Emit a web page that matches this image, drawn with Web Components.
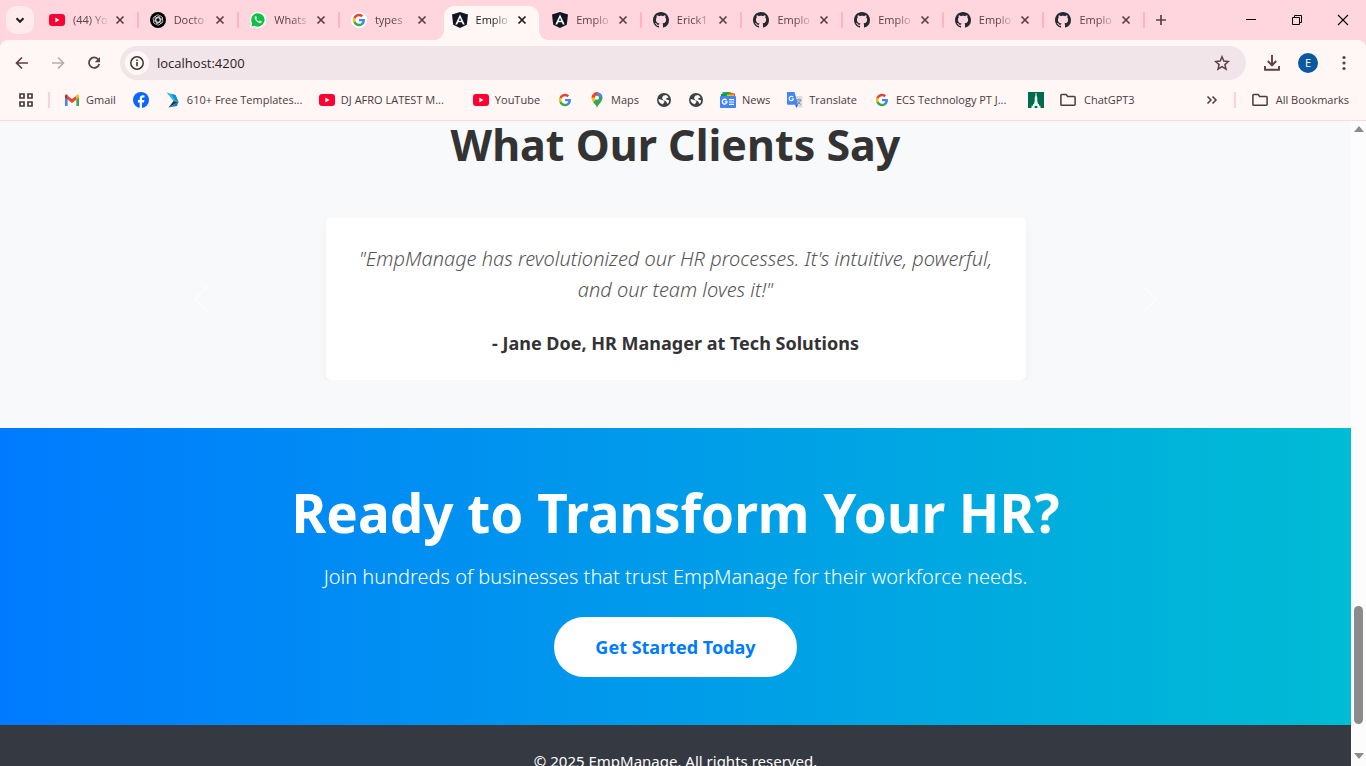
<!DOCTYPE html>
<html lang="en">
<head>
<meta charset="utf-8">
<title>EmpManage</title>
<style>
  html, body { margin: 0; height: 100%; }
  body { font-family: "Noto Sans", "Open Sans", sans-serif; overflow: hidden; }
</style>
</head>
<body>
<browser-window></browser-window>
<script>
const GOOGLE = `
  <path fill="#4285f4" d="M45.1 24.5c0-1.6-.1-3.1-.4-4.5H24v8.5h11.8c-.5 2.8-2 5.100-4.400 6.700v5.500h7.100c4.200-3.800 6.600-9.500 6.600-16.200z"/>
  <path fill="#34a853" d="M24 46c5.900 0 10.900-2 14.500-5.300l-7.100-5.500c-2 1.300-4.500 2.100-7.400 2.100-5.700 0-10.600-3.900-12.300-9.100H4.300v5.700C8 41.100 15.400 46 24 46z"/>
  <path fill="#fbbc05" d="M11.700 28.200c-.4-1.300-.7-2.700-.7-4.200s.3-2.900.7-4.200v-5.700H4.300C2.800 17.100 2 20.400 2 24s.8 6.900 2.300 9.900z"/>
  <path fill="#ea4335" d="M24 10.800c3.200 0 6.100 1.100 8.400 3.300l6.300-6.300C34.900 4.200 29.900 2 24 2 15.400 2 8 6.900 4.300 14.100l7.400 5.700c1.700-5.200 6.600-9 12.300-9z"/>`;
const stroke = (body, w = 2) => `<g fill="none" stroke="currentColor" stroke-width="${w}">${body}</g>`;

const ICONS = {
  youtube: ['0 0 16 16', `<rect y="2" width="16" height="12" rx="3" fill="#ff0033"/><path d="M6.300 5.500v5l4.200-2.500z" fill="#fff"/>`],
  openai: ['0 0 16 16', `<circle cx="8" cy="8" r="8" fill="#000"/><g fill="none" stroke="#ddd" stroke-width=".8">
    ${[0, 60, 120, 180, 240, 300].map(a => `<path transform="rotate(${a} 8 8)" d="M5.200 8.800V5.400a2.500 2.500 0 0 1 4.600-1.300M8 5.500l2.200 1.300v2.400"/>`).join('')}</g>`],
  whatsapp: ['0 0 16 16', `<path d="M8 0a8 8 0 0 0-7 11.800L0 16l4.300-1A8 8 0 1 0 8 0z" fill="#fff"/>
    <path d="M8 1.200a6.700 6.700 0 0 0-5.800 10.200l-.8 3.200 3.300-.8A6.700 6.700 0 1 0 8 1.200z" fill="#0cc143"/>
    <path d="M5.500 4.300c-.9.400-1.200 1.500-.6 2.800a8 8 0 0 0 4 3.900c1.500.6 2.500.2 2.800-.9l.1-.6-1.900-.9-.9 1c-1.300-.5-2.200-1.400-2.800-2.600l.7-.9-.7-1.800z" fill="#fff"/>`],
  googleTab: ['0 0 16 16', `<circle cx="8" cy="8" r="8" fill="#fff"/><g transform="translate(1.300 1.300) scale(.28)">${GOOGLE}</g>`],
  google: ['0 0 16 16', `<circle cx="8" cy="8" r="8" fill="#fff"/><g transform="translate(1.300 1.300) scale(.28)">${GOOGLE}</g>`],
  angular: ['0 0 16 16', `<path d="M8 0l8 2.500-1.200 10.200L8 16l-6.800-3.300L0 2.500z" fill="#101722"/>
    <path fill="#fff" d="M8 2.500L3.300 12.500H5.200L6.200 10.200H9.800L10.800 12.500H12.700zM8 5.700L9.200 8.700H6.800z"/>`],
  github: ['0 0 16 16', `<path fill="#24292f" d="M8 0C3.580 0 0 3.580 0 8c0 3.540 2.290 6.530 5.470 7.590.4.070.55-.17.55-.38 0-.19-.01-.82-.01-1.490-2.010.37-2.530-.49-2.690-.94-.09-.23-.48-.94-.82-1.130-.28-.15-.68-.52-.01-.53.63-.01 1.080.58 1.230.82.72 1.210 1.870.87 2.330.66.07-.52.28-.87.51-1.070-1.780-.2-3.640-.89-3.640-3.950 0-.87.31-1.590.82-2.150-.08-.2-.36-1.020.08-2.120 0 0 .67-.21 2.200.82.64-.18 1.320-.27 2-.27s1.360.09 2 .27c1.530-1.040 2.200-.82 2.200-.82.44 1.100.16 1.920.08 2.120.51.56.82 1.270.82 2.150 0 3.070-1.870 3.750-3.650 3.950.29.25.54.73.54 1.480 0 1.070-.01 1.930-.01 2.200 0 .21.15.46.55.38A8 8 0 0 0 16 8c0-4.420-3.580-8-8-8z"/>`],
  close: ['0 0 16 16', stroke('<path d="M4.500 4.500l7 7m0-7l-7 7"/>', 1.7)],
  plus: ['0 0 16 16', stroke('<path d="M8 3v10M3 8h10"/>', 1.7)],
  chevronDown: ['0 0 16 16', stroke('<path d="M4.500 6.300L8 9.800l3.500-3.500"/>', 2)],
  minimize: ['0 0 16 16', stroke('<path d="M3 7.500h10"/>', 1)],
  restore: ['0 0 16 16', stroke('<path d="M3.500 5.500h7v7h-7zM5.500 5.500v-2h7v7h-2"/>', 1)],
  closeWindow: ['0 0 16 16', stroke('<path d="M3 3l10 10M13 3L3 13"/>', 1.100)],
  back: ['0 0 16 16', stroke('<path d="M14 8H3M8 2.500L2.500 8 8 13.500"/>', 1.700)],
  forward: ['0 0 16 16', stroke('<path d="M2 8h11M8 2.500L13.500 8 8 13.500"/>', 1.700)],
  reload: ['0 0 16 16', stroke('<path d="M12.300 4.500A5.200 5.200 0 1 0 13.200 9"/>', 1.800) + '<path d="M14 2v5.300H8.700z" fill="currentColor"/>'],
  info: ['0 0 16 16', stroke('<circle cx="8" cy="8" r="6.200"/>', 1.500) + '<path d="M7.200 7h1.600v4.300H7.200zM7.200 4.500h1.600v1.600H7.200z" fill="currentColor"/>'],
  star: ['0 0 16 16', stroke('<path d="M8 1.800l1.800 4.300 4.600.4-3.500 3.100 1.100 4.600L8 11.700l-4 2.500 1.100-4.600-3.500-3.100 4.600-.4z"/>', 1.500)],
  download: ['0 0 16 16', stroke('<path d="M8 0v10M3.800 6L8 10.300 12.200 6M1 11v3.700h14V11"/>', 1.900)],
  dots: ['0 0 16 16', '<g fill="currentColor"><circle cx="8" cy="2.500" r="1.600"/><circle cx="8" cy="8" r="1.600"/><circle cx="8" cy="13.500" r="1.600"/></g>'],
  apps: ['0 0 16 16', stroke('<path d="M2 2h4v4H2zM10 2h4v4h-4zM2 10h4v4H2zM10 10h4v4h-4z"/>', 1.700)],
  gmail: ['0 0 16 16', `<path d="M1 14h2.600V6L1 4z" fill="#4285f4"/><path d="M12.400 14H15V4l-2.600 2z" fill="#34a853"/>
    <path d="M3.600 3.700L8 7l4.400-3.300v3.900L8 10.900 3.600 7.600z" fill="#ea4335"/>
    <path d="M1 4.200C1 2.500 2.600 2.100 3.600 3v4.600L1 5.600z" fill="#c5221f"/><path d="M15 4.200C15 2.500 13.400 2.100 12.400 3v4.600L15 5.600z" fill="#fbbc04"/>`],
  facebook: ['0 0 16 16', `<circle cx="8" cy="8" r="8" fill="#0866ff"/><path d="M6.700 16V10.600H4.900V8h1.800V6.700c0-2.400 1.200-3.500 3.300-3.500l1.500.2v2.200h-1C9.400 5.600 9 6 9 6.900V8h2.400L11 10.600H9V16z" fill="#fff"/>`],
  templates: ['0 0 16 16', `<path d="M1.500 .500L10.500 3 13.500 10 8.500 9z" fill="#35b8e6"/><path d="M6 1.700L10.500 3 13.500 10 10 8.500z" fill="#1593d0"/><path d="M3.500 15.500L8.500 9 13.500 10z" fill="#123e5c"/><path d="M3.500 15.500L13.500 10 12 14z" fill="#1c7cae"/>`],
  maps: ['0 0 16 16', `<path d="M8 16c.5-3.500 5.500-5.700 5.500-10.300A5.500 5.500 0 0 0 12.300 2.300L4 10c1.500 2 3.600 3.500 4 6z" fill="#34a853"/>
    <path d="M2.500 5.500c0 1.900.6 3.200 1.500 4.500l6-7-3.300-2.700z" fill="#fbbc04"/><path d="M3.800 2.100A5.500 5.500 0 0 0 2.500 5.700L6 5.300 6.500 4z" fill="#ea4335"/><path d="M3.800 2.100L6.500 4.300 10 .400A5.500 5.500 0 0 0 3.800 2.100z" fill="#ea4335"/>
    <path d="M10 .400L6.200 4.700l3.500 2.800 3.500-4A5.500 5.500 0 0 0 10 .4z" fill="#4285f4"/><circle cx="8" cy="5.700" r="2" fill="#fff"/>`],
  globe: ['0 0 16 16', `<circle cx="8" cy="8" r="7" fill="#3c4043"/><path d="M2.500 7.500c1-.5 2.500-.2 3.500.5s2.200.3 2.400 1.500-1.300 1.200-1.200 2.800c-2-.3-4.600-1.800-4.700-4.800zM7 3.800l3-.9 1.800 1.300.7 1.600-1.900.3-.4 1.300 2.900.8c.2 1.600-.6 3-1.700 3.700L10 9.300 7.200 8 6 6.300z" fill="#fff7f5"/>`],
  news: ['0 0 16 16', `<path d="M2.500 0h8v5h-8z" fill="#34a853"/><path d="M10 .5l5 1.300V5h-5z" fill="#ea4335"/><path d="M1 2l8-1v4H1z" fill="#0f9d58"/><path d="M7 2.500h7V5H7z" fill="#fbbc04"/><rect y="4" width="16" height="12" rx="1" fill="#4285f4"/>
    <g fill="none" stroke="#fff" stroke-width="1.300"><path d="M6.600 8.300A2.400 2.400 0 1 0 7 10H4.900"/><path d="M9 7.700h5M9 10h5M9 12.300h5" stroke-width="1.200"/></g>`],
  translate: ['0 0 16 16', `<path d="M6 4h9.300v11.500H9z" fill="#dadce0"/><path d="M8 12.500h3L9.500 16z" fill="#3b57c4"/><path d="M0 0h7.500L11 12.800H1a1 1 0 0 1-1-1z" fill="#4285f4"/>
    <g fill="none"><path d="M6.200 5.300A2.200 2.200 0 1 0 6.500 7H4.500" stroke="#fff" stroke-width="1.100"/><path d="M9.500 8h5M12 6.800V8M13.500 8c-.5 2-1.500 3.500-3 4.500M10.500 9c.8 1.600 2 2.800 3.300 3.500" stroke="#7a8a90"/></g>`],
  tower: ['0 0 16 16', `<path d="M0 0h16v16H0z" fill="#006b4d"/><path d="M7.500 1h1v2l.8 3v3l.9 3H11v1.500l1.500.5v2h-9v-2l1.500-.5V12h.8l.9-3V6l.8-3z" fill="#e6f2ea"/><path d="M6.700 14h2.600v2H6.700z" fill="#006b4d"/>`],
  folder: ['0 0 16 16', stroke('<path d="M.9 3.400a.8.800 0 0 1 .8-.8H6l1.700 1.900h6.600a.8.800 0 0 1 .8.800v7.200a.8.800 0 0 1-.8.800H1.700a.8.800 0 0 1-.8-.8z"/>', 1.500)],
  more: ['0 0 16 16', stroke('<path d="M3.500 4.500L7 8l-3.500 3.500M8.500 4.500L12 8l-3.500 3.500"/>', 1.500)],
  previous: ['0 0 16 16', '<path fill="#fff" d="M11.400 1.600a.5.500 0 0 1 0 .8L5.700 8l5.700 5.600a.5.500 0 0 1-.8.800l-6-6a.5.500 0 0 1 0-.8l6-6a.5.500 0 0 1 .8 0z"/>'],
  next: ['0 0 16 16', '<path fill="#fff" d="M4.600 1.600a.5.500 0 0 1 .8 0l6 6a.5.500 0 0 1 0 .8l-6 6a.5.500 0 0 1-.8-.8L10.300 8 4.600 2.400a.5.500 0 0 1 0-.8z"/>'],
};

const BASE = `*, *::before, *::after { box-sizing: border-box; }
  button { font: inherit; color: inherit; background: none; border: 0; padding: 0; margin: 0; }
  a { color: inherit; text-decoration: none; }`;

function define(name, render) {
  customElements.define(name, class extends HTMLElement {
    connectedCallback() {
      if (this.shadowRoot) return;
      const template = document.createElement('template');
      template.innerHTML = render(this);
      this.attachShadow({ mode: 'open' }).append(template.content.cloneNode(true));
    }
  });
}

define('ui-icon', el => {
  const [box, body] = ICONS[el.getAttribute('name')];
  return `<style>:host { display: block; flex: none; width: 16px; height: 16px; } svg { display: block; width: 100%; height: 100%; }</style>
    <svg viewBox="${box}" aria-hidden="true">${body}</svg>`;
});

define('browser-tab', el => `
  <style>${BASE}
    :host { display: flex; align-items: center; flex: 1 1 0; min-width: 0; height: 40px; padding-left: 11px; position: relative; color: #5b4046; }
    .tab { display: flex; align-items: center; gap: 8px; flex: 1; min-width: 0; height: 34px; z-index: 1; }
    .title { flex: 1; min-width: 0; overflow: hidden; white-space: nowrap; text-align: left; line-height: 16px;
      -webkit-mask-image: linear-gradient(90deg, #000 45%, transparent 95%); mask-image: linear-gradient(90deg, #000 45%, transparent 95%); }
    .close { width: 16px; height: 16px; margin-right: 9px; z-index: 1; }
    .line { width: 2px; height: 16px; border-radius: 1px; background: #ffb3c0; }
    :host([quiet]) .line { visibility: hidden; }
    :host([active]) { color: #1f1a1b; }
    :host([active])::before { content: ""; position: absolute; inset: 6px 2px 0 3px; border-radius: 10px 10px 0 0; background: #fff7f5; }
    :host([active])::after { content: ""; position: absolute; left: -7px; right: -8px; bottom: 0; height: 10px;
      background: radial-gradient(circle at 0 0, transparent 10px, #fff7f5 10px) left / 10px 10px no-repeat,
                  radial-gradient(circle at 100% 0, transparent 10px, #fff7f5 10px) right / 10px 10px no-repeat; }
  </style>
  <button class="tab"><ui-icon name="${el.getAttribute('icon')}"></ui-icon><span class="title"><slot></slot></span></button>
  <button class="close" aria-label="Close tab"><ui-icon name="close"></ui-icon></button>
  <span class="line"></span>`);

define('tab-strip', () => `
  <style>${BASE}
    :host { display: flex; align-items: center; height: 40px; background: #ffd6de; color: #5b4046; }
    .search { display: grid; place-items: center; flex: none; width: 28px; height: 28px; margin: 0 4px 0 6px; border-radius: 10px; background: #ffebee; color: #1f1a1b; }
    .tabs { display: flex; flex: 1; min-width: 0; }
    .add { display: grid; place-items: center; flex: none; width: 32px; height: 28px; margin-right: 51px; }
    .window { display: flex; flex: none; color: #000; }
    .window button { display: grid; place-items: center; width: 46px; height: 40px; }
  </style>
  <button class="search" aria-label="Search tabs"><ui-icon name="chevronDown"></ui-icon></button>
  <div class="tabs">
    <browser-tab icon="youtube">(44) Yo</browser-tab>
    <browser-tab icon="openai">Docto</browser-tab>
    <browser-tab icon="whatsapp">Whats</browser-tab>
    <browser-tab icon="googleTab" quiet>types</browser-tab>
    <browser-tab icon="angular" active quiet>Emplo</browser-tab>
    <browser-tab icon="angular">Emplo</browser-tab>
    <browser-tab icon="github">Erick1</browser-tab>
    <browser-tab icon="github">Emplo</browser-tab>
    <browser-tab icon="github">Emplo</browser-tab>
    <browser-tab icon="github">Emplo</browser-tab>
    <browser-tab icon="github">Emplo</browser-tab>
  </div>
  <button class="add" aria-label="New tab"><ui-icon name="plus"></ui-icon></button>
  <div class="window">
    <button aria-label="Minimize"><ui-icon name="minimize"></ui-icon></button>
    <button aria-label="Restore"><ui-icon name="restore"></ui-icon></button>
    <button aria-label="Close"><ui-icon name="closeWindow"></ui-icon></button>
  </div>`);

define('address-bar', () => `
  <style>${BASE}
    :host { display: block; background: #ffd6de; color: #5b4046; }
    .bar { display: flex; align-items: center; gap: 8px; padding: 6px 8px 0; background: #fff7f5; border-radius: 8px 8px 0 0; }
    .tool { display: grid; place-items: center; flex: none; width: 28px; height: 28px; }
    .off { color: #b9adae; }
    .field { display: flex; align-items: center; gap: 8px; flex: 1; height: 34px; margin: 0 4px; padding: 0 10px 0 5px; border-radius: 17px; background: #f1e5e9; }
    .info { display: grid; place-items: center; flex: none; width: 24px; height: 24px; border-radius: 12px; background: #fff7f5; color: #3c3335; }
    input { flex: 1; min-width: 0; border: 0; outline: 0; padding: 0; background: none; color: #2a2224; font: inherit; font-size: 13px; line-height: 20px; }
    .avatar { width: 20px; height: 20px; border-radius: 10px; background: #0b57a0; color: #fff; font-size: 11px; line-height: 20px; text-align: center; }
  </style>
  <div class="bar">
    <button class="tool" aria-label="Back"><ui-icon name="back"></ui-icon></button>
    <button class="tool off" aria-label="Forward"><ui-icon name="forward"></ui-icon></button>
    <button class="tool" aria-label="Reload"><ui-icon name="reload"></ui-icon></button>
    <div class="field">
      <button class="info" aria-label="Site information"><ui-icon name="info"></ui-icon></button>
      <input type="text" aria-label="Address" value="localhost:4200">
      <button class="tool" aria-label="Bookmark this tab"><ui-icon name="star"></ui-icon></button>
    </div>
    <button class="tool" aria-label="Downloads"><ui-icon name="download"></ui-icon></button>
    <button class="tool" aria-label="Profile"><span class="avatar">E</span></button>
    <button class="tool" aria-label="Menu"><ui-icon name="dots"></ui-icon></button>
  </div>`);

define('bookmark-link', el => `
  <style>${BASE}
    :host { display: block; flex: none; }
    a { display: flex; align-items: center; gap: 6px; height: 24px; }
    :host([icon="folder"]) a { gap: 8px; }
    .text { line-height: 16px; white-space: nowrap; padding-right: 1px; }
    :host([long]) .text { width: 116px; }
  </style>
  <a href="#" aria-label="${el.textContent || el.getAttribute('icon')}"><ui-icon name="${el.getAttribute('icon')}"></ui-icon>${el.textContent ? '<span class="text"><slot></slot></span>' : ''}</a>`);

define('bookmarks-bar', () => `
  <style>${BASE}
    :host { display: flex; align-items: center; gap: 16px; height: 41px; padding: 0 16px 0 18px; background: #fff7f5; border-bottom: 1px solid #ffd6de; color: #4b3a3e; }
    .line { flex: none; width: 2px; height: 16px; background: #ffd0d9; }
    .first { margin: 0 -2px; }
    .more { margin-left: auto; width: 16px; height: 16px; }
    .last { margin-left: -2px; }
  </style>
  <bookmark-link icon="apps"></bookmark-link>
  <span class="line first"></span>
  <bookmark-link icon="gmail">Gmail</bookmark-link>
  <bookmark-link icon="facebook"></bookmark-link>
  <bookmark-link icon="templates" long>610+ Free Templates...</bookmark-link>
  <bookmark-link icon="youtube" long>DJ AFRO LATEST M...</bookmark-link>
  <bookmark-link icon="youtube">YouTube</bookmark-link>
  <bookmark-link icon="google"></bookmark-link>
  <bookmark-link icon="maps">Maps</bookmark-link>
  <bookmark-link icon="globe"></bookmark-link>
  <bookmark-link icon="globe"></bookmark-link>
  <bookmark-link icon="news">News</bookmark-link>
  <bookmark-link icon="translate">Translate</bookmark-link>
  <bookmark-link icon="google" long>ECS Technology PT J...</bookmark-link>
  <bookmark-link icon="tower"></bookmark-link>
  <bookmark-link icon="folder">ChatGPT3</bookmark-link>
  <button class="more" aria-label="More bookmarks"><ui-icon name="more"></ui-icon></button>
  <span class="line last"></span>
  <bookmark-link icon="folder">All Bookmarks</bookmark-link>`);

define('testimonial-card', () => `
  <style>${BASE}
    :host { display: block; flex: 0 1 700px; padding: 25px 24px; border-radius: 5px; background: #fff; box-shadow: 0 4px 8px rgba(0, 0, 0, .05); text-align: center; }
    blockquote { margin: 0 0 26px; font-size: 20px; line-height: 31px; font-weight: 300; font-style: italic; color: #555; }
    p { margin: 0; font-size: 18px; line-height: 24px; font-weight: 700; color: #333; }
  </style>
  <blockquote><slot></slot></blockquote>
  <p><slot name="author"></slot></p>`);

define('clients-section', () => `
  <style>${BASE}
    :host { display: block; padding: 0 12px 48px; background: #f8f9fb; }
    h2 { margin: 0 0 49px; font-size: 43px; line-height: 48px; font-weight: 700; color: #333; text-align: center; }
    .carousel { display: flex; max-width: 1116px; margin: 0 auto; }
    .control { display: grid; place-items: center; flex: 0 0 15%; opacity: .5; }
    .control ui-icon { width: 32px; height: 32px; }
    .slides { display: flex; justify-content: center; flex: 1; min-width: 0; overflow: hidden; }
  </style>
  <h2>What Our Clients Say</h2>
  <div class="carousel">
    <button class="control" aria-label="Previous"><ui-icon name="previous"></ui-icon></button>
    <div class="slides">
      <testimonial-card>"EmpManage has revolutionized our HR processes. It's intuitive, powerful, and our team loves it!"<span slot="author">- Jane Doe, HR Manager at Tech Solutions</span></testimonial-card>
    </div>
    <button class="control" aria-label="Next"><ui-icon name="next"></ui-icon></button>
  </div>`);

define('cta-section', () => `
  <style>${BASE}
    :host { display: block; padding: 49px 24px 48px; background: linear-gradient(90deg, #007bff, #00bcd4); color: #fff; text-align: center; }
    h2 { margin: 0 0 12px; font-size: 53px; line-height: 72px; font-weight: 700; }
    p { margin: 0 0 24px; font-size: 20px; line-height: 32px; font-weight: 300; }
    button { height: 60px; padding: 0 41px; border-radius: 30px; background: #fff; color: #007bff; font-size: 18px; line-height: 24px; font-weight: 700; vertical-align: top; }
  </style>
  <h2>Ready to Transform Your HR?</h2>
  <p>Join hundreds of businesses that trust EmpManage for their workforce needs.</p>
  <button>Get Started Today</button>`);

define('page-footer', () => `
  <style>${BASE}
    :host { display: block; padding: 24px; background: #353941; color: #fff; text-align: center; }
    p { margin: 0; font-size: 15px; line-height: 24px; }
  </style>
  <p>© 2025 EmpManage. All rights reserved.</p>`);

define('page-scrollbar', () => `
  <style>${BASE}
    :host { display: flex; flex-direction: column; align-items: center; flex: none; width: 15px; padding: 5px 0 7px; background: #fcfcfc; }
    .up, .down { flex: none; border: 5px solid transparent; }
    .up { border-top: 0; border-bottom: 6px solid #8b8b8b; }
    .down { border-bottom: 0; border-top: 6px solid #8b8b8b; }
    .track { flex: 1; display: flex; flex-direction: column; justify-content: flex-end; padding: 0 0 29px; }
    .thumb { width: 9px; height: 20%; border-radius: 5px; background: #8b8b8b; }
  </style>
  <span class="up"></span><div class="track"><div class="thumb"></div></div><span class="down"></span>`);

define('browser-window', () => `
  <style>${BASE}
    :host { display: flex; flex-direction: column; height: 100vh; overflow: hidden; }
    header { flex: none; font-family: "Open Sans", "Noto Sans", sans-serif; font-size: 11px; }
    .view { display: flex; flex: 1; min-height: 0; }
    main { flex: 1; min-width: 0; overflow: hidden; background: #353941; }
  </style>
  <header><tab-strip></tab-strip><address-bar></address-bar><bookmarks-bar></bookmarks-bar></header>
  <div class="view">
    <main><clients-section></clients-section><cta-section></cta-section><page-footer></page-footer></main>
    <page-scrollbar></page-scrollbar>
  </div>`);
</script>
</body>
</html>
